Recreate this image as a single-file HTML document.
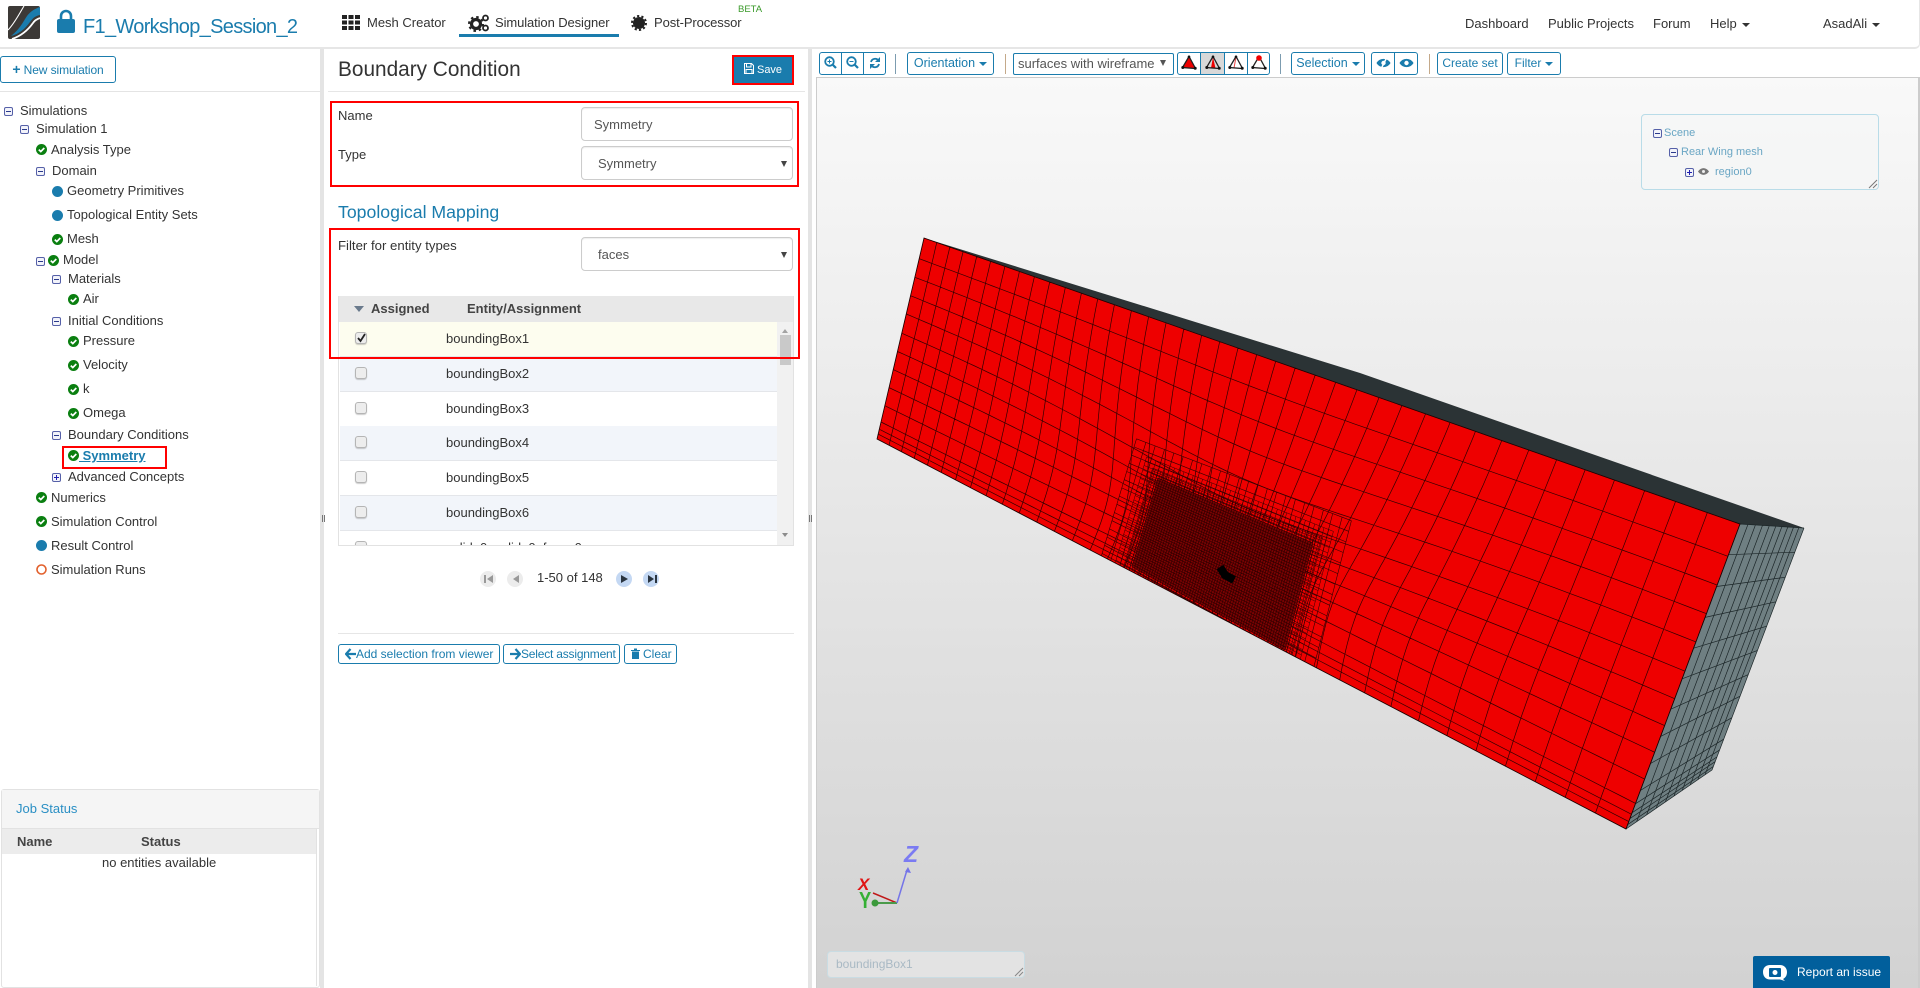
<!DOCTYPE html>
<html>
<head>
<meta charset="utf-8">
<title>Boundary Condition</title>
<style>
html,body{margin:0;padding:0;background:#fff;}
body{width:1920px;height:988px;position:relative;overflow:hidden;font-family:"Liberation Sans",sans-serif;font-size:13px;color:#333;}
.t{position:absolute;white-space:nowrap;line-height:20px;height:20px;}
.a{position:absolute;box-sizing:border-box;}
svg.i{position:absolute;overflow:visible;}
.b{position:absolute;box-sizing:border-box;border:1px solid #1a7cad;border-radius:3px;background:#fff;color:#1a7cad;top:52px;height:23px;line-height:21px;font-size:12.5px;text-align:center;white-space:nowrap;}
.c{display:inline-block;border-top:4px solid currentColor;border-left:4px solid transparent;border-right:4px solid transparent;vertical-align:middle;margin-left:4px;}
.red{position:absolute;box-sizing:border-box;border:2px solid #f00;}
.in{position:absolute;box-sizing:border-box;left:581px;width:212px;height:34px;border:1px solid #ccc;border-radius:4px;background:#fff;color:#555;line-height:34px;box-shadow:inset 0 1px 1px rgba(0,0,0,.07);}
.ar{position:absolute;right:5px;top:14px;border-top:6px solid #444;border-left:3px solid transparent;border-right:3px solid transparent;}
.row{position:absolute;left:1px;width:438px;height:35px;box-sizing:border-box;border-bottom:1px solid #e4e6ea;line-height:34px;}
.row span{position:absolute;left:106px;}
.cb{position:absolute;left:15px;top:10px;width:12px;height:12px;box-sizing:border-box;border:1px solid #b5b5b5;border-radius:3px;background:#ededed;box-shadow:0 1px 1px rgba(0,0,0,.2);}
.pg{position:absolute;top:571px;width:16px;height:16px;border-radius:50%;}
.sb{position:absolute;top:644px;height:20px;box-sizing:border-box;border:1px solid #1a7cad;border-radius:3px;color:#1a7cad;font-size:12px;line-height:18px;white-space:nowrap;background:#fff;}
.sb svg{position:absolute;left:6px;top:3px;}
.sb span{position:absolute;top:0;}
.sep{position:absolute;top:54px;width:1px;height:20px;}
.sc{position:absolute;color:#6aa6c4;font-size:11px;line-height:14px;white-space:nowrap;}
</style>
</head>
<body>
<svg width="0" height="0" style="position:absolute">
<defs>
<symbol id="mi" viewBox="0 0 9 9"><rect x=".5" y=".5" width="8" height="8" rx="1.500" fill="#f2f3fa" stroke="#5560a8"/><path d="M2 4.500h5" stroke="#2b3a8c" stroke-width="1"/></symbol>
<symbol id="pl" viewBox="0 0 9 9"><rect x=".5" y=".5" width="8" height="8" rx="1.500" fill="#f2f3fa" stroke="#5560a8"/><path d="M2 4.500h5M4.500 2v5" stroke="#2020b0" stroke-width="1"/></symbol>
<symbol id="ck" viewBox="0 0 11 11"><circle cx="5.500" cy="5.500" r="5.500" fill="#0a7f10"/><path d="M2.800 5.600l2 2 3.500-3.600" fill="none" stroke="#fff" stroke-width="1.700"/></symbol>
<symbol id="bl" viewBox="0 0 11 11"><circle cx="5.500" cy="5.500" r="5.500" fill="#1a7cad"/></symbol>
<symbol id="cone" viewBox="0 0 16 15"><path d="M8 1.500L1.500 12.500 14.500 13.500z" fill="none" stroke="#222" stroke-width="1.300"/><circle cx="8" cy="1.800" r="1.300" fill="#111"/><circle cx="1.800" cy="12.500" r="1.500" fill="#111"/><circle cx="14.200" cy="13.300" r="1.500" fill="#111"/></symbol>
</defs>
</svg>

<!-- header -->
<div class="a" style="left:-4px;top:-4px;width:1924px;height:53px;border:1px solid #e6e6e6;border-bottom-width:2px;border-radius:0 0 5px 5px"></div>
<svg class="i" style="left:8px;top:6px" width="32" height="33" viewBox="0 0 32 33"><rect width="32" height="33" rx="2" fill="#3c3936"/><path d="M3 30C12 23 15 16 19 10 22 6 26 3 32 1V9C27 10 25 12 22 16 17 23 11 28 3 30Z" fill="#1a7cad"/><path d="M4 33C13 30 20 24 25 17 27 14 29 13 32 12" fill="none" stroke="#fff" stroke-width="1.800"/><path d="M0 24C6 18 10 10 16 0" fill="none" stroke="#fff" stroke-width="1.100"/></svg>
<svg class="i" style="left:56px;top:10px" width="20" height="23" viewBox="0 0 20 23"><rect x="1" y="9" width="18" height="14" rx="2" fill="#1a7cad"/><path d="M5 10V6a5 5 0 0 1 10 0v4" fill="none" stroke="#1a7cad" stroke-width="2.600"/></svg>
<div class="t" style="left:83px;top:15px;height:24px;line-height:24px;font-size:20px;letter-spacing:-.68px;color:#1a7cad">F1_Workshop_Session_2</div>

<svg class="i" style="left:342px;top:15px" width="18" height="15" viewBox="0 0 18 15"><path fill="#222" d="M0 0h5v4H0zM6.500 0h5v4h-5zM13 0h5v4h-5zM0 5.500h5v4H0zM6.500 5.500h5v4h-5zM13 5.500h5v4h-5zM0 11h5v4H0zM6.500 11h5v4h-5zM13 11h5v4h-5z"/></svg>
<div class="t" style="left:367px;top:13px;font-size:13px">Mesh Creator</div>
<svg class="i" style="left:468px;top:14px" width="22" height="18" viewBox="0 0 22 18"><circle cx="8" cy="10" r="4.500" fill="none" stroke="#222" stroke-width="3.200"/><circle cx="8" cy="10" r="7" fill="none" stroke="#222" stroke-width="2" stroke-dasharray="2.500 3"/><circle cx="17.500" cy="4" r="2.500" fill="none" stroke="#222" stroke-width="1.800"/><circle cx="17.500" cy="14" r="2.500" fill="none" stroke="#222" stroke-width="1.800"/></svg>
<div class="t" style="left:495px;top:13px;font-size:13px;letter-spacing:-.1px">Simulation Designer</div>
<div class="a" style="left:459px;top:34px;width:160px;height:3px;background:#1a7cad"></div>
<svg class="i" style="left:631px;top:15px" width="16" height="16" viewBox="0 0 16 16"><circle cx="8" cy="8" r="6" fill="#222"/><circle cx="8" cy="8" r="7" fill="none" stroke="#222" stroke-width="2" stroke-dasharray="2.200 2.200"/></svg>
<div class="t" style="left:654px;top:13px;font-size:13px;letter-spacing:-.1px">Post-Processor</div>
<div class="t" style="left:738px;top:0;font-size:9.500px;color:#3a9a2a">BETA</div>

<div class="t" style="left:1465px;top:14px;color:#333">Dashboard</div>
<div class="t" style="left:1548px;top:14px;color:#333">Public Projects</div>
<div class="t" style="left:1653px;top:14px;color:#333">Forum</div>
<div class="t" style="left:1710px;top:14px;color:#333">Help<i class="c" style="margin-left:5px"></i></div>
<div class="t" style="left:1823px;top:14px;color:#333">AsadAli<i class="c" style="margin-left:5px"></i></div>

<!-- splitters -->
<div class="a" style="left:320px;top:49px;width:4px;height:939px;background:#e4e4e4"></div>
<div class="a" style="left:808px;top:49px;width:4px;height:939px;background:#e4e4e4"></div>
<div class="a" style="left:322px;top:515px;width:3px;height:7px;border-left:1px solid #777;border-right:1px solid #777"></div>
<div class="a" style="left:809px;top:515px;width:3px;height:7px;border-left:1px solid #777;border-right:1px solid #777"></div>

<!-- left panel -->
<div class="a" style="left:0;top:56px;width:116px;height:27px;border:1px solid #1a7cad;border-radius:3px;color:#1a7cad;font-size:12px;line-height:25px;text-align:center;white-space:nowrap;letter-spacing:-.1px"><b style="font-size:14px">+</b> New simulation</div>
<div class="a" style="left:0;top:91px;width:320px;height:1px;background:#e4e4e4"></div>

<svg class="i" style="left:4px;top:107px" width="9" height="9"><use href="#mi"/></svg><div class="t" style="left:20px;top:101px">Simulations</div>
<svg class="i" style="left:20px;top:125px" width="9" height="9"><use href="#mi"/></svg><div class="t" style="left:36px;top:119px">Simulation 1</div>
<svg class="i" style="left:36px;top:144px" width="11" height="11"><use href="#ck"/></svg><div class="t" style="left:51px;top:140px">Analysis Type</div>
<svg class="i" style="left:36px;top:167px" width="9" height="9"><use href="#mi"/></svg><div class="t" style="left:52px;top:161px">Domain</div>
<svg class="i" style="left:52px;top:186px" width="11" height="11"><use href="#bl"/></svg><div class="t" style="left:67px;top:181px">Geometry Primitives</div>
<svg class="i" style="left:52px;top:210px" width="11" height="11"><use href="#bl"/></svg><div class="t" style="left:67px;top:205px">Topological Entity Sets</div>
<svg class="i" style="left:52px;top:234px" width="11" height="11"><use href="#ck"/></svg><div class="t" style="left:67px;top:229px">Mesh</div>
<svg class="i" style="left:36px;top:257px" width="9" height="9"><use href="#mi"/></svg><svg class="i" style="left:48px;top:255px" width="11" height="11"><use href="#ck"/></svg><div class="t" style="left:63px;top:250px">Model</div>
<svg class="i" style="left:52px;top:275px" width="9" height="9"><use href="#mi"/></svg><div class="t" style="left:68px;top:269px">Materials</div>
<svg class="i" style="left:68px;top:294px" width="11" height="11"><use href="#ck"/></svg><div class="t" style="left:83px;top:289px">Air</div>
<svg class="i" style="left:52px;top:317px" width="9" height="9"><use href="#mi"/></svg><div class="t" style="left:68px;top:311px">Initial Conditions</div>
<svg class="i" style="left:68px;top:336px" width="11" height="11"><use href="#ck"/></svg><div class="t" style="left:83px;top:331px">Pressure</div>
<svg class="i" style="left:68px;top:360px" width="11" height="11"><use href="#ck"/></svg><div class="t" style="left:83px;top:355px">Velocity</div>
<svg class="i" style="left:68px;top:384px" width="11" height="11"><use href="#ck"/></svg><div class="t" style="left:83px;top:379px">k</div>
<svg class="i" style="left:68px;top:408px" width="11" height="11"><use href="#ck"/></svg><div class="t" style="left:83px;top:403px">Omega</div>
<svg class="i" style="left:52px;top:431px" width="9" height="9"><use href="#mi"/></svg><div class="t" style="left:68px;top:425px">Boundary Conditions</div>
<div class="red" style="left:62px;top:446px;width:105px;height:23px"></div>
<svg class="i" style="left:68px;top:450px" width="11" height="11"><use href="#ck"/></svg><div class="t" style="left:79px;top:446px;color:#1a7cad;font-weight:bold;text-decoration:underline">&nbsp;Symmetry</div>
<svg class="i" style="left:52px;top:473px" width="9" height="9"><use href="#pl"/></svg><div class="t" style="left:68px;top:467px">Advanced Concepts</div>
<svg class="i" style="left:36px;top:492px" width="11" height="11"><use href="#ck"/></svg><div class="t" style="left:51px;top:488px">Numerics</div>
<svg class="i" style="left:36px;top:516px" width="11" height="11"><use href="#ck"/></svg><div class="t" style="left:51px;top:512px">Simulation Control</div>
<svg class="i" style="left:36px;top:540px" width="11" height="11"><use href="#bl"/></svg><div class="t" style="left:51px;top:536px">Result Control</div>
<svg class="i" style="left:36px;top:564px" width="11" height="11"><circle cx="5.500" cy="5.500" r="4.500" fill="none" stroke="#e2602c" stroke-width="1.600"/></svg><div class="t" style="left:51px;top:560px">Simulation Runs</div>

<!-- job status -->
<div class="a" style="left:1px;top:789px;width:319px;height:199px;border:1px solid #e2e2e2;border-radius:3px;background:#fff"></div>
<div class="a" style="left:2px;top:790px;width:317px;height:39px;background:#f5f5f5;border-bottom:1px solid #e2e2e2"></div>
<div class="t" style="left:16px;top:799px;color:#2a8fc4;font-size:13px">Job Status</div>
<div class="a" style="left:2px;top:829px;width:314px;height:25px;background:#ececec"></div>
<div class="a" style="left:316px;top:829px;width:1px;height:157px;background:#e2e2e2"></div>
<div class="t" style="left:17px;top:832px;font-weight:bold;color:#444">Name</div>
<div class="t" style="left:141px;top:832px;font-weight:bold;color:#444">Status</div>
<div class="t" style="left:102px;top:853px">no entities available</div>

<!-- middle panel -->
<div class="t" style="left:338px;top:57px;height:26px;line-height:26px;font-size:20.800px">Boundary Condition</div>
<div class="a" style="left:732px;top:55px;width:62px;height:30px;background:#1a7cad;border:2px solid #f00;color:#fff;font-size:11px;line-height:26px;text-align:center;white-space:nowrap"><svg width="10" height="11" viewBox="0 0 10 11" style="vertical-align:-1px"><path d="M.5.500h7l2 2v8h-9z M2.500 1v3h4.500V1 M2 10V6.500h6V10" fill="none" stroke="#fff"/></svg> Save</div>
<div class="a" style="left:328px;top:91px;width:477px;height:1px;background:#e6e6e6"></div>

<div class="red" style="left:330px;top:101px;width:469px;height:86px"></div>
<div class="t" style="left:338px;top:106px">Name</div>
<div class="in" style="top:107px;padding-left:12px">Symmetry</div>
<div class="t" style="left:338px;top:145px">Type</div>
<div class="in" style="top:146px;padding-left:16px">Symmetry<i class="ar"></i></div>

<div class="t" style="left:338px;top:200px;height:24px;line-height:24px;font-size:17.700px;color:#1a7cad">Topological Mapping</div>

<div class="t" style="left:338px;top:236px;font-size:13.200px">Filter for entity types</div>
<div class="in" style="top:237px;padding-left:16px">faces<i class="ar"></i></div>

<div class="a" style="left:338px;top:296px;width:456px;height:250px;border:1px solid #e2e2e2;border-top:0;overflow:hidden;background:#fff">
  <div class="a" style="left:-1px;top:0;width:456px;height:26px;background:#e8e8e8"></div>
  <i class="a" style="left:15px;top:10px;border-top:6px solid #6a7a8c;border-left:5px solid transparent;border-right:5px solid transparent"></i>
  <b class="t" style="left:32px;top:3px;color:#444">Assigned</b>
  <b class="t" style="left:128px;top:3px;color:#444">Entity/Assignment</b>
  <div class="row" style="top:26px;background:#fdfdef;height:35px"><i class="cb"></i><svg class="i" style="left:17px;top:11px" width="9" height="9" viewBox="0 0 9 9"><path d="M1 5l2.500 3L8 1" fill="none" stroke="#222" stroke-width="1.800"/></svg><span>boundingBox1</span></div>
  <div class="row" style="top:61px;background:#f2f5fa"><i class="cb"></i><span>boundingBox2</span></div>
  <div class="row" style="top:96px;background:#fff"><i class="cb"></i><span>boundingBox3</span></div>
  <div class="row" style="top:130px;background:#f2f5fa"><i class="cb"></i><span>boundingBox4</span></div>
  <div class="row" style="top:165px;background:#fff"><i class="cb"></i><span>boundingBox5</span></div>
  <div class="row" style="top:200px;background:#f2f5fa"><i class="cb"></i><span>boundingBox6</span></div>
  <div class="row" style="top:235px;background:#fff"><i class="cb"></i><span>solid_0_solid_0_face_0</span></div>
  <div class="a" style="left:438px;top:26px;width:16px;height:224px;background:#f1f1f1"></div>
  <div class="a" style="left:441px;top:39px;width:11px;height:30px;background:#c9c9c9"></div>
  <i class="a" style="left:443px;top:33px;border-bottom:4px solid #a3a3a3;border-left:3.500px solid transparent;border-right:3.500px solid transparent"></i>
  <i class="a" style="left:443px;top:237px;border-top:4px solid #8c8c8c;border-left:3.500px solid transparent;border-right:3.500px solid transparent"></i>
</div>

<div class="red" style="left:329px;top:228px;width:471px;height:131px"></div>

<div class="pg" style="left:480px;background:#ececec"></div>
<div class="pg" style="left:507px;background:#ececec"></div>
<div class="pg" style="left:616px;background:#c4d8f3"></div>
<div class="pg" style="left:643px;background:#c4d8f3"></div>
<svg class="i" style="left:481px;top:571px" width="186" height="16" viewBox="0 0 186 16"><path fill="#999" d="M3 4h2v8H3zM12 4v8L6 8zM38 4v8l-6-4z"/><path fill="#2a3540" d="M140 4l7 4-7 4zM167 4l6 4-6 4zM174 4h2v8h-2z"/></svg>
<div class="t" style="left:537px;top:568px">1-50 of 148</div>

<div class="a" style="left:338px;top:633px;width:456px;height:1px;background:#e6e6e6"></div>
<div class="sb" style="left:338px;width:162px"><svg width="11" height="12" viewBox="0 0 11 12"><path d="M5.500 1L1 6l4.500 5M1.500 6H11" fill="none" stroke="#1a7cad" stroke-width="2.200"/></svg><span style="left:17px">Add selection from viewer</span></div>
<div class="sb" style="left:503px;width:117px"><svg width="11" height="12" viewBox="0 0 11 12"><path d="M5.500 1L10 6l-4.500 5M0 6h9.500" fill="none" stroke="#1a7cad" stroke-width="2.200"/></svg><span style="left:17px;letter-spacing:-.2px">Select assignment</span></div>
<div class="sb" style="left:624px;width:53px"><svg width="9" height="11" viewBox="0 0 9 11"><path fill="#1a7cad" d="M0 2h9v1H0zM3 .500h3V2H3zM1 3.500h7V11H1z"/></svg><span style="left:18px">Clear</span></div>

<!-- viewer toolbar -->
<div class="b" style="left:819px;width:23px;border-radius:3px 0 0 3px"><svg width="13" height="13" viewBox="0 0 13 13" style="vertical-align:-2px"><circle cx="5.500" cy="5.500" r="4.300" fill="none" stroke="#1a7cad" stroke-width="1.800"/><path d="M8.500 8.500l3.500 3.500" stroke="#1a7cad" stroke-width="2.200"/><path d="M3.500 5.500h4M5.500 3.500v4" stroke="#1a7cad"/></svg></div>
<div class="b" style="left:841px;width:23px;border-radius:0"><svg width="13" height="13" viewBox="0 0 13 13" style="vertical-align:-2px"><circle cx="5.500" cy="5.500" r="4.300" fill="none" stroke="#1a7cad" stroke-width="1.800"/><path d="M8.500 8.500l3.500 3.500" stroke="#1a7cad" stroke-width="2.200"/><path d="M3.500 5.500h4" stroke="#1a7cad"/></svg></div>
<div class="b" style="left:863px;width:23px;border-radius:0 3px 3px 0"><svg width="12" height="12" viewBox="0 0 12 12" style="vertical-align:-2px"><path d="M2 5a4.200 4.200 0 0 1 7.500-1.500M10 7a4.200 4.200 0 0 1-7.500 1.500" fill="none" stroke="#1a7cad" stroke-width="1.800"/><path fill="#1a7cad" d="M11 0v5H6zM1 12V7h5z"/></svg></div>
<div class="sep" style="left:895px;background:#7c9cb0"></div>
<div class="b" style="left:907px;width:87px">Orientation<i class="c"></i></div>
<div class="sep" style="left:1005px;background:#c4a98a"></div>
<div class="b" style="left:1013px;width:161px;top:53px;height:22px;color:#555;font-size:13px;text-align:left;padding-left:4px;line-height:20px;border-radius:2px">surfaces with wireframe<i class="a" style="left:146px;top:6px;border-top:6px solid #555;border-left:3px solid transparent;border-right:3px solid transparent"></i></div>
<div class="b" style="left:1177px;width:24px;border-radius:3px 0 0 3px"><svg width="16" height="15" viewBox="0 0 16 15" style="vertical-align:-3px"><path d="M8 1.500L1.500 12.500 14.500 13.500z" fill="#e00"/><use href="#cone"/></svg></div>
<div class="b" style="left:1200px;width:25px;border-radius:0;background:#d8d8d8"><svg width="16" height="15" viewBox="0 0 16 15" style="vertical-align:-3px"><path d="M8 2L6 13 10.500 13.300z" fill="#e00"/><use href="#cone"/></svg></div>
<div class="b" style="left:1224px;width:24px;border-radius:0"><svg width="16" height="15" viewBox="0 0 16 15" style="vertical-align:-3px"><path d="M8 2L6 13" stroke="#e44" fill="none"/><use href="#cone"/></svg></div>
<div class="b" style="left:1247px;width:23px;border-radius:0 3px 3px 0"><svg width="16" height="15" viewBox="0 0 16 15" style="vertical-align:-3px"><use href="#cone"/><circle cx="8" cy="3" r="2.800" fill="#e00"/></svg></div>
<div class="sep" style="left:1280px;background:#7c9cb0"></div>
<div class="b" style="left:1291px;width:74px">Selection<i class="c"></i></div>
<div class="b" style="left:1371px;width:24px;border-radius:3px 0 0 3px"><svg width="15" height="12" viewBox="0 0 15 12" style="vertical-align:-2px"><path d="M.5 6C3.500 .5 11.500 .5 14.500 6 11.500 11.500 3.500 11.500 .5 6z" fill="#1a7cad"/><circle cx="7.500" cy="6" r="2.200" fill="#fff"/><path d="M11 0L5 12" stroke="#fff" stroke-width="1.500"/></svg></div>
<div class="b" style="left:1394px;width:24px;border-radius:0 3px 3px 0"><svg width="15" height="12" viewBox="0 0 15 12" style="vertical-align:-2px"><path d="M.5 6C3.500 .5 11.500 .5 14.500 6 11.500 11.500 3.500 11.500 .5 6z" fill="#1a7cad"/><circle cx="7.500" cy="6" r="2.200" fill="#fff"/></svg></div>
<div class="sep" style="left:1429px;background:#c4a98a"></div>
<div class="b" style="left:1437px;width:66px;font-size:12px">Create set</div>
<div class="b" style="left:1507px;width:54px;font-size:12px">Filter<i class="c"></i></div>

<!-- viewer -->
<div class="a" style="left:816px;top:77px;width:1104px;height:911px;background:linear-gradient(#f9f9f9,#d2d2d2);border-top:1px solid #ccc;border-left:1px solid #ccc;border-right:2px solid #ccc"></div>

<svg id="mesh" class="i" style="left:0;top:0" width="1920" height="988" viewBox="0 0 1920 988">
<defs><clipPath id="rc"><polygon points="924,238 1740,524 1626,829 877,439"/></clipPath></defs>
<polygon points="924,238 1360,373 1804,528 1740,524" fill="#2b3335"/>
<polygon points="1740,524 1804,528 1712,770 1626,829" fill="#6f7f82"/>
<polygon points="924,238 1740,524 1626,829 877,439" fill="#ee0000"/>
</svg>

<!-- scene tree -->
<div class="a" style="left:1641px;top:114px;width:238px;height:76px;border:1px solid #b9dce8;border-radius:4px;background:rgba(245,246,247,.6)"></div>
<svg class="i" style="left:1653px;top:129px" width="9" height="9"><use href="#mi"/></svg><div class="sc" style="left:1664px;top:126px">Scene</div>
<svg class="i" style="left:1669px;top:148px" width="9" height="9"><use href="#mi"/></svg><div class="sc" style="left:1681px;top:145px">Rear Wing mesh</div>
<svg class="i" style="left:1685px;top:168px" width="9" height="9"><use href="#pl"/></svg>
<svg class="i" style="left:1698px;top:167px" width="11" height="9" viewBox="0 0 11 9"><path d="M0 4.500C3 0 8 0 11 4.500 8 9 3 9 0 4.500z" fill="#777"/><circle cx="5.500" cy="4.500" r="1.500" fill="#eee"/></svg>
<div class="sc" style="left:1715px;top:165px">region0</div>
<svg class="i" style="left:1868px;top:179px" width="9" height="9"><path d="M1 9L9 1M5 9L9 5" stroke="#777"/></svg>

<!-- axes -->
<svg class="i" style="left:0;top:0" width="1920" height="988">
<path d="M897 903L873 893" stroke="#c01818" stroke-width="1.500"/>
<path d="M897 903L876 903" stroke="#4a9a4a" stroke-width="2"/>
<circle cx="875" cy="903" r="3.500" fill="#3c9a3c"/>
<path d="M897 903L907 870" stroke="#7474e8" stroke-width="1.500"/>
<path d="M908 867l3 6-6-1z" fill="#7474e8"/>
<text x="904" y="862" font-family="Liberation Sans" font-size="23" font-weight="bold" font-style="italic" fill="#7b7bf2">Z</text>
<text x="858" y="890" font-family="Liberation Sans" font-size="17" font-weight="bold" font-style="italic" fill="#e01515">X</text>
<text transform="translate(859 908) scale(.8 1)" font-family="Liberation Sans" font-size="23" font-weight="bold" fill="#35b035">Y</text>
</svg>

<div class="a" style="left:827px;top:951px;width:198px;height:27px;background:#e3e3e3;border:1px solid #c9dce3;border-radius:4px;color:#a9b9c4;font-size:12px;line-height:25px;padding-left:8px">boundingBox1<svg class="i" style="right:1px;bottom:1px" width="8" height="8"><path d="M0 8L8 0M4 8L8 4" stroke="#888"/></svg></div>

<div class="a" style="left:1753px;top:956px;width:137px;height:32px;background:#015f9c;border-radius:2px 2px 0 0;color:#fff;font-size:12px;line-height:32px;padding-left:44px;white-space:nowrap">Report an issue<svg class="i" style="left:10px;top:8px" width="24" height="17" viewBox="0 0 24 17"><path d="M7 1h10c4 0 7 3 7 7s-2 6-4 7l2 2-5-1.500H7c-4 0-7-3-7-7.500S3 1 7 1z" fill="#fff"/><rect x="6" y="4" width="12" height="9" rx="1" fill="#015f9c"/><circle cx="12" cy="8.500" r="2.500" fill="#fff"/></svg></div>

<script>
(function(){
var svg=document.getElementById('mesh'),NS='http://www.w3.org/2000/svg';
function add(d,col,w,clip,op){var p=document.createElementNS(NS,'path');p.setAttribute('d',d);p.setAttribute('fill','none');p.setAttribute('stroke',col);p.setAttribute('stroke-width',w);if(clip)p.setAttribute('clip-path','url(#rc)');if(op)p.setAttribute('opacity',op);svg.appendChild(p);}
function hom(Q){
 var x0=Q[0][0],y0=Q[0][1],x1=Q[1][0],y1=Q[1][1],x2=Q[2][0],y2=Q[2][1],x3=Q[3][0],y3=Q[3][1];
 var dx1=x1-x2,dx2=x3-x2,sx=x0-x1+x2-x3,dy1=y1-y2,dy2=y3-y2,sy=y0-y1+y2-y3;
 var den=dx1*dy2-dx2*dy1,g=(sx*dy2-dx2*sy)/den,h=(dx1*sy-sx*dy1)/den;
 var a=x1-x0+g*x1,b=x3-x0+h*x3,c=x0,d=y1-y0+g*y1,e=y3-y0+h*y3,f=y0;
 return {f:function(u,v){var w=g*u+h*v+1;return [(a*u+b*v+c)/w,(d*u+e*v+f)/w];},
  inv:function(X,Y){var w=(d*h-e*g)*X+(b*g-a*h)*Y+(a*e-b*d);return [((e-f*h)*X+(c*h-b)*Y+(b*f-c*e))/w,((f*g-d)*X+(a-c*g)*Y+(c*d-a*f))/w];}};
}
var R=hom([[924,238],[1740,524],[1626,829],[877,439]]);
var C=R.inv(1222,563),cu=C[0],cv=C[1];
function warp(u,v){
 var du=(u-cu)/0.26,dv=(v-cv)/0.55,k=0.42*Math.exp(-(du*du+dv*dv));
 var tv=Math.min(1,4*v*(1-v)),tu=Math.min(1,4*u*(1-u));
 return R.f(u+(cu-u)*k*tu,v+(cv-v)*k*tv);
}
var vs=[0,.1,.19,.28,.37,.465,.556,.647,.738,.83,.913,.95,.975,1],d='',i,j,p;
var N=40,S=48;
for(i=0;i<=N;i++){var u=i/N;for(j=0;j<=S;j++){p=warp(u,j/S);d+=(j?'L':'M')+p[0].toFixed(1)+' '+p[1].toFixed(1);}}
for(i=0;i<vs.length;i++){for(j=0;j<=80;j++){p=warp(j/80,vs[i]);d+=(j?'L':'M')+p[0].toFixed(1)+' '+p[1].toFixed(1);}}
add(d,'#300000','0.7',true);

var B=[[1158,478],[1313,543],[1285,650],[1132,567]];
function bl(s,t){var ax=B[0][0]+(B[1][0]-B[0][0])*s,ay=B[0][1]+(B[1][1]-B[0][1])*s,bx=B[3][0]+(B[2][0]-B[3][0])*s,by=B[3][1]+(B[2][1]-B[3][1])*s;return [ax+(bx-ax)*t,ay+(by-ay)*t];}
function grid(m,sp,col,w,op){
 var W=168,Hh=102,s0=-m/W,s1=1+m/W,t0=-m/Hh,t1=1+m/Hh,ns=Math.round((W+2*m)/sp),nt=Math.round((Hh+2*m)/sp),dd='',a,b,k;
 for(k=0;k<=ns;k++){var s=s0+(s1-s0)*k/ns;a=bl(s,t0);b=bl(s,t1);dd+='M'+a[0].toFixed(1)+' '+a[1].toFixed(1)+'L'+b[0].toFixed(1)+' '+b[1].toFixed(1);}
 for(k=0;k<=nt;k++){var t=t0+(t1-t0)*k/nt;a=bl(s0,t);b=bl(s1,t);dd+='M'+a[0].toFixed(1)+' '+a[1].toFixed(1)+'L'+b[0].toFixed(1)+' '+b[1].toFixed(1);}
 add(dd,col,w,true,op);
}
grid(32,10,'#300000','0.6');
grid(17,5,'#300000','0.5');
grid(8,3,'#300000','0.5');
var poly=document.createElementNS(NS,'polygon');poly.setAttribute('points',B.map(function(q){return q.join(',');}).join(' '));poly.setAttribute('fill','#7c0202');poly.setAttribute('clip-path','url(#rc)');svg.appendChild(poly);
grid(0,2.6,'#180000','0.7','0.75');
add('M1220 567L1225 575L1234 580','#000','8');

var G=hom([[1740,524],[1804,528],[1712,770],[1626,829]]);
var gv=[0,.098,.2,.3,.4,.5,.6,.69,.78,.87,.915,.945,.965,.985,1],ds='';
for(i=0;i<=10;i++){var a=G.f(i/10,0),b=G.f(i/10,1);ds+='M'+a[0].toFixed(1)+' '+a[1].toFixed(1)+'L'+b[0].toFixed(1)+' '+b[1].toFixed(1);}
for(i=0;i<gv.length;i++){var a2=G.f(0,gv[i]),b2=G.f(1,gv[i]);ds+='M'+a2[0].toFixed(1)+' '+a2[1].toFixed(1)+'L'+b2[0].toFixed(1)+' '+b2[1].toFixed(1);}
add(ds,'#1b2527','0.7');
add('M924 238L1740 524L1626 829L877 439Z','#200000','0.8');
})();
</script>
</body>
</html>
